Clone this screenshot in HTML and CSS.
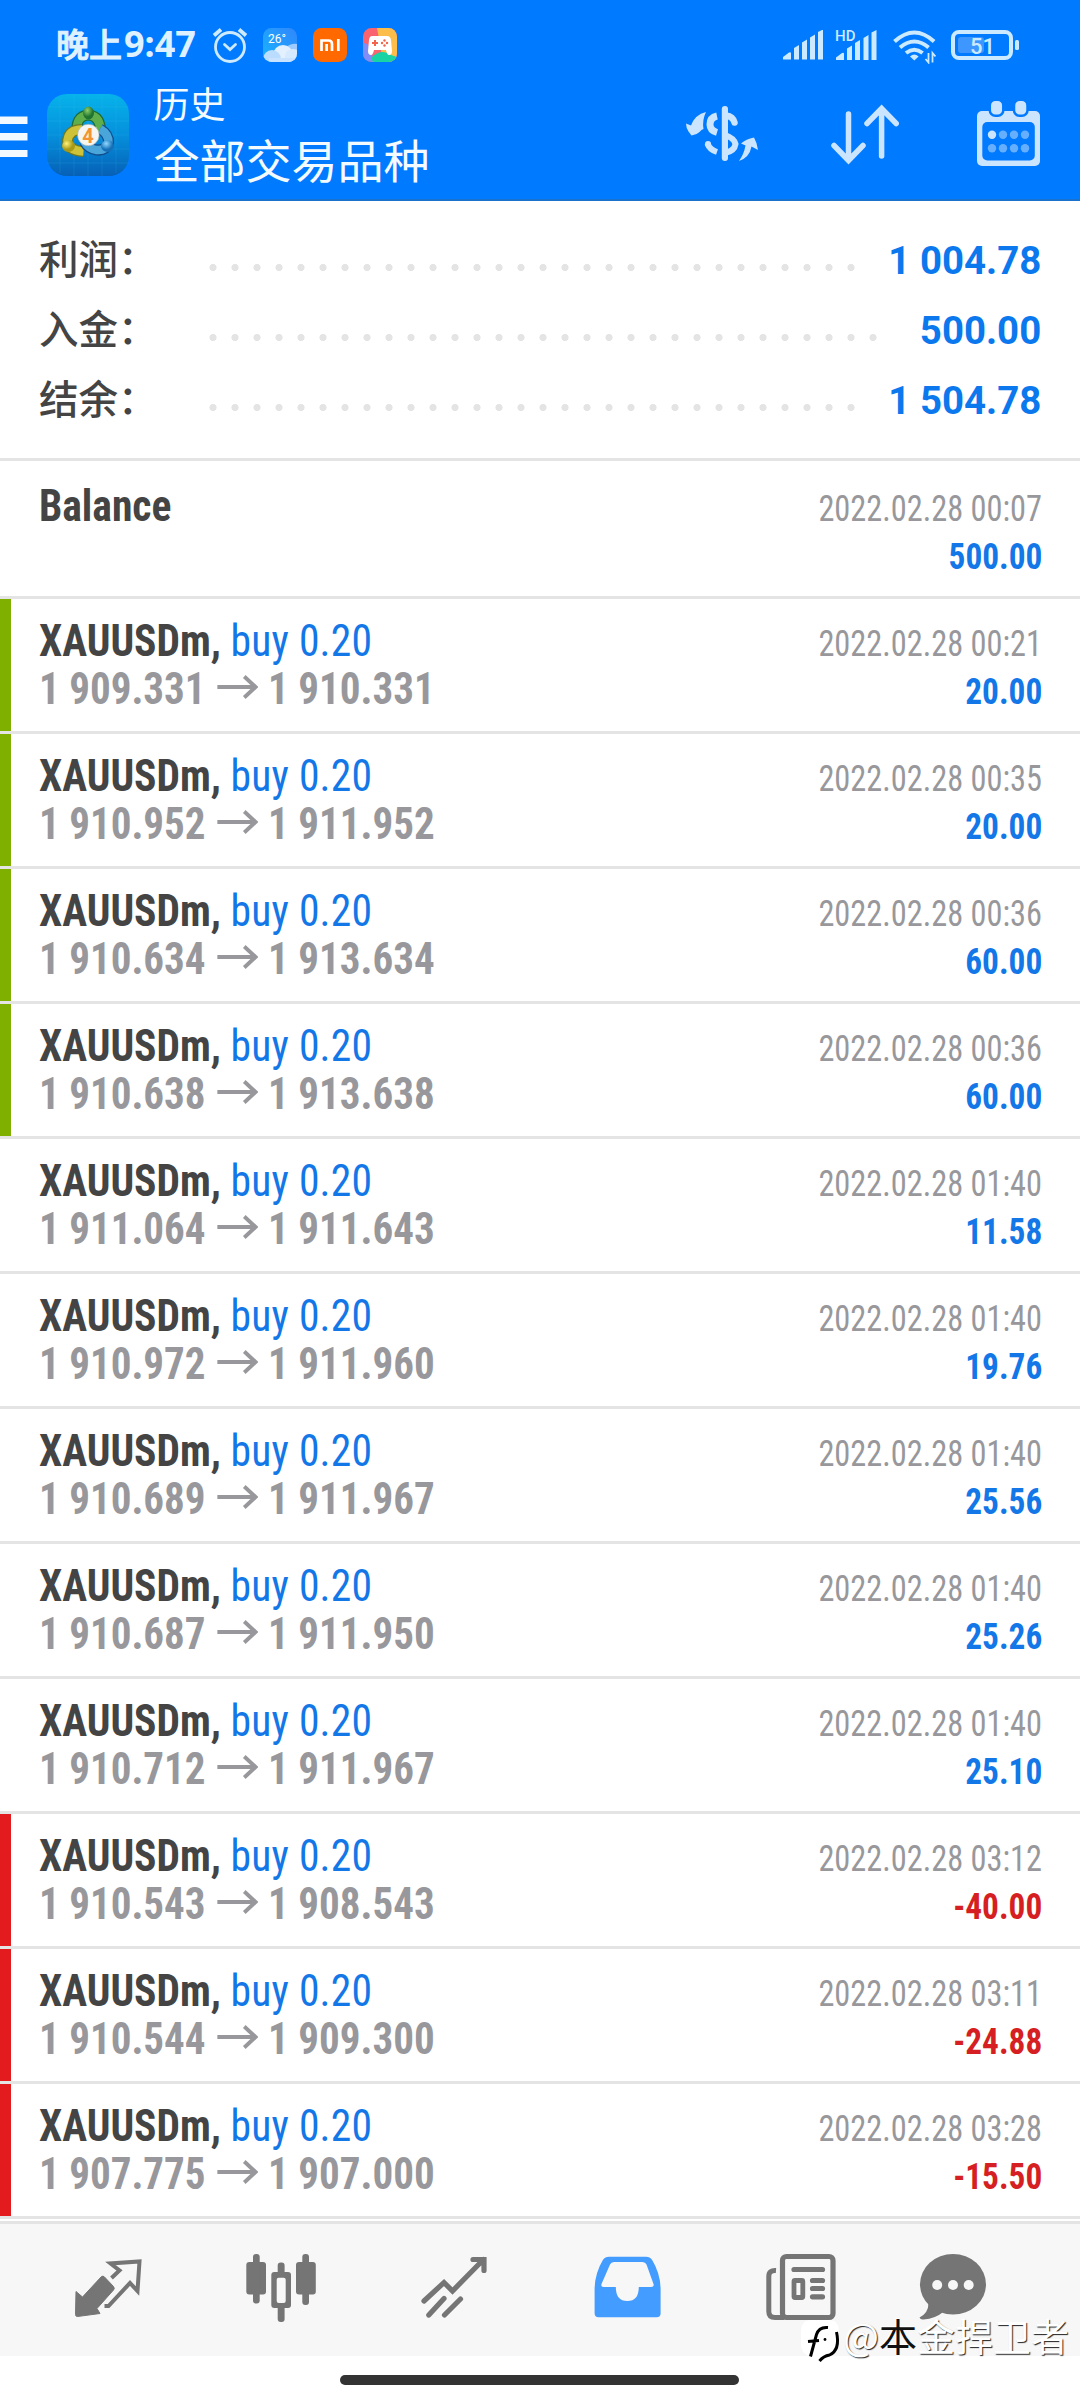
FILE: index.html
```html
<!DOCTYPE html>
<html lang="zh">
<head>
<meta charset="utf-8">
<title>历史</title>
<link rel="stylesheet" href="styles.css">
</head>
<body>
<header class="header">
  <div class="status">
    <div class="time"><span class="ampm">晚上</span><span class="clock">9:47</span></div>
    <div class="status-apps">
      <svg class="alarm" width="36" height="40" viewBox="212 25 36 40" fill="none" stroke="#cdeaff" stroke-linecap="round"><circle cx="230" cy="47" r="14.5" stroke-width="2.8"/><path d="M224.5 44.5l5.5 5 5.5-5" stroke-width="2.8"/><path d="M214 35.5l7-6M246 35.500l-7-6" stroke-width="3.800" stroke-linecap="butt"/></svg>
      <svg width="34" height="34" viewBox="0 0 34 34"><defs><linearGradient id="sky" x1="0" y1="1" x2="1" y2="0"><stop offset="0" stop-color="#16b4ff"/><stop offset="1" stop-color="#3286fb"/></linearGradient><clipPath id="wc"><rect width="34" height="34" rx="8.500"/></clipPath></defs><g clip-path="url(#wc)"><rect width="34" height="34" fill="url(#sky)"/><path d="M22 20q6-5 12-4v14H22z" fill="#9dcbff"/><circle cx="20" cy="27" r="10" fill="#e2f0ff"/><circle cx="30" cy="29" r="8" fill="#d5e9ff"/><circle cx="9" cy="31" r="9" fill="#b9dcff"/><rect x="6" y="30" width="28" height="5" fill="#c8e2ff"/></g><text x="5" y="15" class="temp">26°</text></svg>
      <svg width="34" height="34" viewBox="0 0 34 34"><rect width="34" height="34" rx="8.500" fill="#ff6900"/><path d="M8.500 23V12.500h7q3.500 0 3.500 3.500v7M13.600 16v7M25.300 11v12" fill="none" stroke="#fff" stroke-width="2.700"/></svg>
      <svg width="34" height="34" viewBox="0 0 34 34"><defs><clipPath id="gc"><rect width="34" height="34" rx="8.500"/></clipPath></defs><g clip-path="url(#gc)"><rect width="34" height="34" fill="#f9646f"/><path d="M14 0h20v34H20z" fill="#fdbd4b"/><path d="M0 15q9 0 10 19H0z" fill="#7f8df8"/><path d="M8 30q10-10 20-3l6 2v5H10z" fill="#19d3a4"/><path d="M9 8h15q3.500 0 4 4l1 11q0 4-3 4-2 0-3-5H11q-1 5-3 5-3 0-3-4l1-11q.5-4 3-4z" fill="#fff"/><path d="M12 12v6M9 15h6" stroke="#f2644c" stroke-width="2"/><g fill="#f2644c"><circle cx="21.500" cy="12.500" r="1.200"/><circle cx="21.500" cy="17.500" r="1.200"/><circle cx="19" cy="15" r="1.200"/><circle cx="24" cy="15" r="1.200"/></g></g></svg>
    </div>
    <div class="status-system">
      <svg width="40" height="30" viewBox="0 0 40 30" fill="#cbeaff"><path d="M0 29.500v-2.500l6-4.500q2-1 2 1v6zM11 18l5-3v14.500h-5zM19 12.500l5-3v20h-5zM27 7.500l5-3v25h-5zM35 2l5-2.500v30h-5z"/></svg>
      <svg width="42" height="32" viewBox="0 -1 42 31" fill="#cbeaff"><path d="M1 29.500v-2.500l6-4.500q2-1 2 1v6zM12 18l5-3v14.500h-5zM20 12.500l5-3v20h-5zM28.500 7.500l5-3v25h-5zM36.500 2l5-2.500v30h-5z"/><text x="0" y="10" class="hd">HD</text></svg>
      <svg width="44" height="36" viewBox="892 28 44 36" fill="none" stroke="#cbeaff" stroke-width="4"><path d="M894.500 41.500q19.800-18 39.600 0M900 47.500q14.300-12 28.600 0M906 53q8.300-6.500 16.600 0"/><path d="M910 56.500q4.300-4 8.600 0l-4.300 4z" fill="#cbeaff" stroke="none"/><path d="M928.500 53v9.500l-3-3.500M932.500 62.500V53l3 3.500" stroke-width="1.800"/></svg>
      <svg width="70" height="32" viewBox="950 29 70 32"><rect x="953" y="32" width="58" height="26" rx="6" fill="none" stroke="#cbeaff" stroke-width="4"/><rect x="958" y="37" width="26" height="16" rx="3" fill="#3d97ff"/><rect x="1015" y="40" width="4" height="10" rx="1.500" fill="#cbeaff"/><text x="982.500" y="54" text-anchor="middle" class="batt">51</text></svg>
    </div>
  </div>
  <div class="appbar">
    <svg width="28" height="42" viewBox="0 116 28 42" fill="#f2f9ff"><path d="M0 116.500h27.500v7.500H0zM0 133h27.500v7.500H0zM0 150h27.500v7H0z"/></svg>
    <svg class="logo" width="82" height="82" viewBox="47 94 82 82">
      <defs><linearGradient id="lg" x1="0" y1="0" x2="0" y2="1"><stop offset="0" stop-color="#06b3ea"/><stop offset=".5" stop-color="#0590dc"/><stop offset="1" stop-color="#0660b6"/></linearGradient>
      <radialGradient id="gr" cx=".4" cy=".3"><stop offset="0" stop-color="#8fd068"/><stop offset="1" stop-color="#1f7330"/></radialGradient>
      <radialGradient id="ye" cx=".35" cy=".3"><stop offset="0" stop-color="#fff27b"/><stop offset="1" stop-color="#a89a16"/></radialGradient>
      <radialGradient id="bl" cx=".4" cy=".3"><stop offset="0" stop-color="#8fd8ff"/><stop offset="1" stop-color="#1570b8"/></radialGradient></defs>
      <rect x="47" y="94" width="82" height="82" rx="20" fill="url(#lg)"/>
      <path d="M60 97v76M74 94v82M88 94v82M102 94v82M116 97v76M47 107h82M47 121h82M47 135h82M47 149h82M47 163h82" stroke="#4cc4f4" stroke-opacity=".14"/>
      <g fill="none">
      <path d="M77.500 134q-3-18 11-19 13 1 12 20" stroke="#1d6b34" stroke-width="11"/>
      <path d="M77.500 134q-3-18 11-19 13 1 12 20" stroke="#5fae4c" stroke-width="8.500"/>
      <path d="M82 129.500q-13 0-14.500 11 0 10 16 11" stroke="#6f7920" stroke-width="11"/>
      <path d="M82 129.500q-13 0-14.500 11 0 10 16 11" stroke="#cdc238" stroke-width="8.500"/>
      <path d="M100 129q9 5 8.500 14-3 8-12 7-8-1-12-8" stroke="#104d8c" stroke-width="11"/>
      <path d="M100 129q9 5 8.500 14-3 8-12 7-8-1-12-8" stroke="#4aa5da" stroke-width="8.500"/></g>
      <ellipse cx="88.500" cy="113" rx="5.500" ry="6.500" fill="url(#gr)"/><ellipse cx="68.500" cy="146" rx="6.500" ry="6" fill="url(#ye)"/><ellipse cx="107.500" cy="146" rx="6.500" ry="6" fill="url(#bl)"/>
      <circle cx="88.300" cy="135" r="10.800" fill="#f7f5f2" stroke="#9aa" stroke-width=".6"/>
      <text x="88" y="142.500" text-anchor="middle" class="four">4</text>
    </svg>
    <div class="titles"><div class="subtitle">历史</div><div class="title">全部交易品种</div></div>
    <div class="actions">
      <svg width="74" height="58" viewBox="685 105 74 58" fill="#cce5ff"><rect x="721.800" y="106" width="6.200" height="55" rx="3"/><g fill="none" stroke="#cce5ff"><path d="M717 116q-7 1.500-7 8.500 0 6 7 8" stroke-width="7"/><path d="M707.500 143.500q2 6 9.500 8.500" stroke-width="6" /><path d="M726 115.500q7 1 8.500 7" stroke-width="6.500" stroke-linecap="round"/><path d="M725 135q9 3 10.500 9-1 7-10.500 9" stroke-width="6"/></g><circle cx="708" cy="144" r="3"/><path d="M706 112q-4 8-2.500 17l-2 1-2 2q-3 3-8 3.500l-3-4q-2.500-4-2.500-8l5 2q4-11 15-13.500zM739 161q5-7 6.500-15.500l-4.500-2q5-4.500 13-6 3 5 4 12.500l-6.500-3.500q-2 11-12.500 14.500z"/></svg>
      <svg width="72" height="62" viewBox="829 104 72 62" fill="none" stroke="#cce5ff" stroke-width="5.500" stroke-linecap="round"><path d="M848.500 114v46M834 145.500l14.500 15 14.500-15M881.600 156v-46M867 123.500l14.600-15 14.600 15"/></svg>
      <svg width="64" height="68" viewBox="976 99 64 68"><rect x="977" y="111" width="63" height="55" rx="5" fill="#cce5ff"/><rect x="982.300" y="122" width="52.500" height="38.500" rx="5" fill="#007aff"/><g fill="#cce5ff" stroke="#007aff" stroke-width="2.500"><rect x="989.800" y="99.800" width="13.500" height="16" rx="5.500"/><rect x="1014" y="99.800" width="13.500" height="16" rx="5.500"/></g><g fill="#66afff"><circle cx="992" cy="134.700" r="4.200" fill="#cce5ff"/><circle cx="1003" cy="134.700" r="4.200"/><circle cx="1014" cy="134.700" r="4.200"/><circle cx="1025" cy="134.700" r="4.200"/><circle cx="992" cy="148.300" r="4.200"/><circle cx="1003" cy="148.300" r="4.200"/><circle cx="1014" cy="148.300" r="4.200"/><circle cx="1025" cy="148.300" r="4.200"/></g></svg>
    </div>
  </div>
</header>
<section class="summary">
  <div class="sum-row"><span class="label">利润：</span><i class="dots"></i><b>1 004.78</b></div>
  <div class="sum-row"><span class="label">入金：</span><i class="dots dots-long"></i><b>500.00</b></div>
  <div class="sum-row"><span class="label">结余：</span><i class="dots"></i><b>1 504.78</b></div>
</section>
<svg class="defs" width="0" height="0"><symbol id="arrow" viewBox="0 0 44 26"><path d="M0 13h40M29 2.500L41 13 29 23.500" fill="none" stroke="#98989c" stroke-width="4.200"/></symbol></svg>
<main class="list">
  <article class="deal first"><div class="line"><span class="name">Balance</span><time>2022.02.28 00:07</time></div><div class="line"><span class="price"></span><b>500.00</b></div></article>
  <article class="deal win"><div class="line"><span class="name">XAUUSDm, <em>buy 0.20</em></span><time>2022.02.28 00:21</time></div><div class="line"><span class="price">1 909.331<svg><use href="#arrow"/></svg>1 910.331</span><b>20.00</b></div></article>
  <article class="deal win"><div class="line"><span class="name">XAUUSDm, <em>buy 0.20</em></span><time>2022.02.28 00:35</time></div><div class="line"><span class="price">1 910.952<svg><use href="#arrow"/></svg>1 911.952</span><b>20.00</b></div></article>
  <article class="deal win"><div class="line"><span class="name">XAUUSDm, <em>buy 0.20</em></span><time>2022.02.28 00:36</time></div><div class="line"><span class="price">1 910.634<svg><use href="#arrow"/></svg>1 913.634</span><b>60.00</b></div></article>
  <article class="deal win"><div class="line"><span class="name">XAUUSDm, <em>buy 0.20</em></span><time>2022.02.28 00:36</time></div><div class="line"><span class="price">1 910.638<svg><use href="#arrow"/></svg>1 913.638</span><b>60.00</b></div></article>
  <article class="deal"><div class="line"><span class="name">XAUUSDm, <em>buy 0.20</em></span><time>2022.02.28 01:40</time></div><div class="line"><span class="price">1 911.064<svg><use href="#arrow"/></svg>1 911.643</span><b>11.58</b></div></article>
  <article class="deal"><div class="line"><span class="name">XAUUSDm, <em>buy 0.20</em></span><time>2022.02.28 01:40</time></div><div class="line"><span class="price">1 910.972<svg><use href="#arrow"/></svg>1 911.960</span><b>19.76</b></div></article>
  <article class="deal"><div class="line"><span class="name">XAUUSDm, <em>buy 0.20</em></span><time>2022.02.28 01:40</time></div><div class="line"><span class="price">1 910.689<svg><use href="#arrow"/></svg>1 911.967</span><b>25.56</b></div></article>
  <article class="deal"><div class="line"><span class="name">XAUUSDm, <em>buy 0.20</em></span><time>2022.02.28 01:40</time></div><div class="line"><span class="price">1 910.687<svg><use href="#arrow"/></svg>1 911.950</span><b>25.26</b></div></article>
  <article class="deal"><div class="line"><span class="name">XAUUSDm, <em>buy 0.20</em></span><time>2022.02.28 01:40</time></div><div class="line"><span class="price">1 910.712<svg><use href="#arrow"/></svg>1 911.967</span><b>25.10</b></div></article>
  <article class="deal loss"><div class="line"><span class="name">XAUUSDm, <em>buy 0.20</em></span><time>2022.02.28 03:12</time></div><div class="line"><span class="price">1 910.543<svg><use href="#arrow"/></svg>1 908.543</span><b>-40.00</b></div></article>
  <article class="deal loss"><div class="line"><span class="name">XAUUSDm, <em>buy 0.20</em></span><time>2022.02.28 03:11</time></div><div class="line"><span class="price">1 910.544<svg><use href="#arrow"/></svg>1 909.300</span><b>-24.88</b></div></article>
  <article class="deal loss"><div class="line"><span class="name">XAUUSDm, <em>buy 0.20</em></span><time>2022.02.28 03:28</time></div><div class="line"><span class="price">1 907.775<svg><use href="#arrow"/></svg>1 907.000</span><b>-15.50</b></div></article>
</main>
<nav class="tabs">
  <svg width="173" height="132" viewBox="21 2224 173 132"><path d="M76 2291.500l6.500 5.500 19-20.500q1.500-1 3 .5l9 9.500q1.500 2 0 3.500L97 2308.500l3 5-22.500 3q-2 0-2-2z" fill="#757575" stroke="#757575"/><path d="M111.500 2278l8-7.500-9-7 29-2-2 29.500-7.500-8-21.500 23-4 0" fill="none" stroke="#757575" stroke-width="4"/></svg>
  <svg width="173" height="132" viewBox="194 2224 173 132" fill="#757575"><rect x="246.300" y="2262" width="19.700" height="32.500" rx="3"/><rect x="253" y="2254" width="6.700" height="49.500" rx="3"/><rect x="296" y="2262" width="19.800" height="32.500" rx="3"/><rect x="302.300" y="2254" width="6.700" height="51" rx="3"/><rect x="277.700" y="2262.600" width="6.900" height="14" rx="3"/><rect x="277.700" y="2300" width="6.900" height="22" rx="3"/><rect x="271.300" y="2272" width="19.700" height="36" rx="3"/><rect x="276.700" y="2277.700" width="9" height="25.300" rx="2" fill="#f7f7f7"/></svg>
  <svg width="173" height="132" viewBox="367 2224 173 132" fill="none" stroke="#757575" stroke-width="5.200" stroke-linecap="round"><path d="M424 2301l20-18.500 8.500 8.500 31-31.500M473 2259.500h11v11M428.800 2315l15.200-16.500M444.500 2315l16-16"/></svg>
  <svg width="173" height="132" viewBox="540 2224 173 132"><path fill="#439cff" fill-rule="evenodd" d="M609 2256.700h37q4 0 6 3 8.600 14 8.600 30v23.600q0 4-4 4h-58q-4 0-4-4v-23.600q0-16 8.400-30 2-3 6-3zM614 2262q-3 0-4 2.500l-8.500 19.500q-1 3 2 3h12.300q0 14 11.500 14t11.500-14H651q3.500 0 2.500-3l-7-19.500q-1-2.500-4-2.500z"/></svg>
  <svg width="173" height="132" viewBox="713 2224 173 132" fill="none" stroke="#757575"><rect x="782.500" y="2256.500" width="50.500" height="61" rx="4" stroke-width="5.200"/><path d="M776 2270.500q-7.200-.5-7.200 6v35q0 6 6.200 6h9" stroke-width="5"/><path d="M794 2269.500h28.500M812.500 2280.500h10M812.500 2288.500h10M812.500 2296.800h10" stroke-width="5.200" stroke-linecap="round"/><rect x="794" y="2280.500" width="8.800" height="17" rx="1" stroke-width="4.800"/></svg>
  <svg width="134" height="132" viewBox="886 2224 134 132"><ellipse cx="953" cy="2284.300" rx="33" ry="30.300" fill="#757575"/><path d="M928.500 2303q0 10-9 14.500 1 2.500 4 2 12-1 19-7z" fill="#757575"/><g fill="#f7f7f7"><circle cx="937.200" cy="2285" r="5"/><circle cx="953" cy="2285" r="5"/><circle cx="968.700" cy="2285" r="5"/></g></svg>
</nav>
<div class="gesture"><div class="pill"></div></div>
<div class="watermark">
  <svg width="42" height="44" viewBox="0 0 42 44"><path d="M10 0h18q10 0 10 12v10q0 13-12 13l-10 5-4-4q-12 0-12-12V12Q0 0 10 0z" fill="#fff"/><path d="M27 7.500q-9-1-11.500 7l-6 22M7 21.500l11-1" fill="none" stroke="#000" stroke-width="3"/><circle cx="24" cy="19.500" r="1.400"/><path d="M35.500 12q4 18-7 23-6 1-10 6" fill="none" stroke="#000" stroke-width="3"/></svg>
  <span>@<span class="dark">本</span>金捍卫者</span>
</div>
</body>
</html>
```
FILE: styles.css
```css
* { box-sizing: border-box; }
body { margin: 0; width: 1080px; height: 2400px; overflow: hidden; position: relative; background: #fff; font-family: "Roboto Condensed", Roboto, "Noto Sans CJK SC", sans-serif; }
svg { display: block; flex: none; }

.header { height: 201px; background: #007aff; border-bottom: 2px solid #1b72cc; color: #f4fbff; }
.status { display: flex; height: 76px; padding: 0 60px 0 56px; }
.time { display: flex; align-items: baseline; width: 156px; height: 60px; padding-top: 18px; white-space: nowrap; color: #def1ff; font-weight: 700; }
.ampm { font: 500 33px/50px "Noto Sans CJK SC", sans-serif; -webkit-text-stroke: 1px #def1ff; margin-right: 2px; }
.clock { font: 700 36px/50px "Noto Sans", sans-serif; }
.status-apps { display: flex; gap: 16px; padding-top: 28px; }
.alarm { margin: -3px -1px 0 0; }
.status-system { display: flex; gap: 12.5px; margin-left: auto; padding-top: 30px; }
.status-system svg:nth-child(2) { margin-top: -1px; overflow: visible; }
.status-system svg:nth-child(3) { margin: -2px 2px 0; }
.status-system svg:nth-child(4) { margin-top: -1px; }
.temp { font: 400 12px Roboto, sans-serif; fill: #fff; }
.hd { font: 500 15px Roboto, sans-serif; }
.batt { font: 500 22px Roboto, sans-serif; fill: #cbeaff; }
.four { font: 700 20px Roboto, sans-serif; fill: #f39332; }

.appbar { display: flex; height: 123px; padding-right: 40px; }
.appbar > svg:first-child { margin-top: 40px; }
.logo { margin: 18px 24.5px 0 19px; }
.titles { font-family: "Noto Sans CJK SC", sans-serif; white-space: nowrap; }
.subtitle { font-size: 36px; line-height: 52px; }
.title { font-size: 46px; line-height: 60px; }
.actions { display: flex; margin-left: auto; gap: 72px; align-items: flex-start; }
.actions svg:nth-child(1) { margin-top: 29px; }
.actions svg:nth-child(2) { margin: 28px 3px 0 -2px; }
.actions svg:nth-child(3) { margin-top: 23px; }

.summary { height: 260px; padding: 21px 39px 0 39px; border-bottom: 3px solid #e4e4e4; }
.sum-row { display: flex; align-items: baseline; height: 70px; line-height: 70px; }
.label { width: 162.500px; font-family: "Noto Sans CJK SC", sans-serif; font-size: 39.5px; font-weight: 500; color: #444; }
.dots { align-self: flex-start; width: 660px; height: 7px; margin-top: 42px; background: radial-gradient(circle at center, #e4e4e4 3.2px, transparent 3.9px) 0 0 / 22px 7px repeat-x; }
.dots-long { width: 682px; }
.sum-row b { margin-left: auto; font: 700 39px/70px Roboto, sans-serif; color: #0b78ee; transform: scaleX(.985); transform-origin: right; }

.defs { position: absolute; }
.deal { height: 135px; padding: 18px 38px 0 39px; border-bottom: 3px solid #e4e4e4; position: relative; }
.deal.first { height: 138px; padding-top: 21px; }
.deal.first .line:last-child { padding-top: 2.5px; }
.win::before, .loss::before { content: ""; position: absolute; left: 0; top: 0; width: 11px; height: 132px; background: #7fb000; }
.loss::before { background: #e31b1e; }
.line { display: flex; justify-content: space-between; align-items: baseline; height: 48px; line-height: 48px; white-space: nowrap; }
.name { font-size: 44px; font-weight: 700; color: #444; transform: scaleX(.944); transform-origin: left; }
.name em { font-style: normal; font-weight: 400; letter-spacing: .25px; color: #1377e8; }
.price { display: flex; font-size: 44px; font-weight: 700; color: #98989c; transform: scaleX(.933); transform-origin: left; }
.price svg { width: 44px; height: 26px; margin: 9px 11px 0 12px; align-self: flex-start; }
.line time { font-size: 36px; color: #98989c; transform: scaleX(.898); transform-origin: right; }
.line b { font-size: 36px; color: #1377e8; transform: scaleX(.925); transform-origin: right; }
.line time, .line b { position: relative; }
.loss b { color: #d61f22; }

.tabs { display: flex; height: 135px; margin-top: 2px; padding-left: 21px; background: #f7f7f7; border-top: 3px solid #e4e4e4; }
.gesture { height: 44px; padding: 19px 0 0 340px; }
.pill { width: 399px; height: 10px; border-radius: 5px; background: #333; }

.watermark { position: absolute; left: 801px; top: 2320px; display: flex; color: #fff; white-space: nowrap; font: 400 38px/40px "Noto Sans CJK SC", sans-serif; text-shadow: 1px 1px 1px #222; }
.watermark > span { margin-top: -5px; }
.dark { color: #111; text-shadow: -1px -1px 0 #fff; }
```
